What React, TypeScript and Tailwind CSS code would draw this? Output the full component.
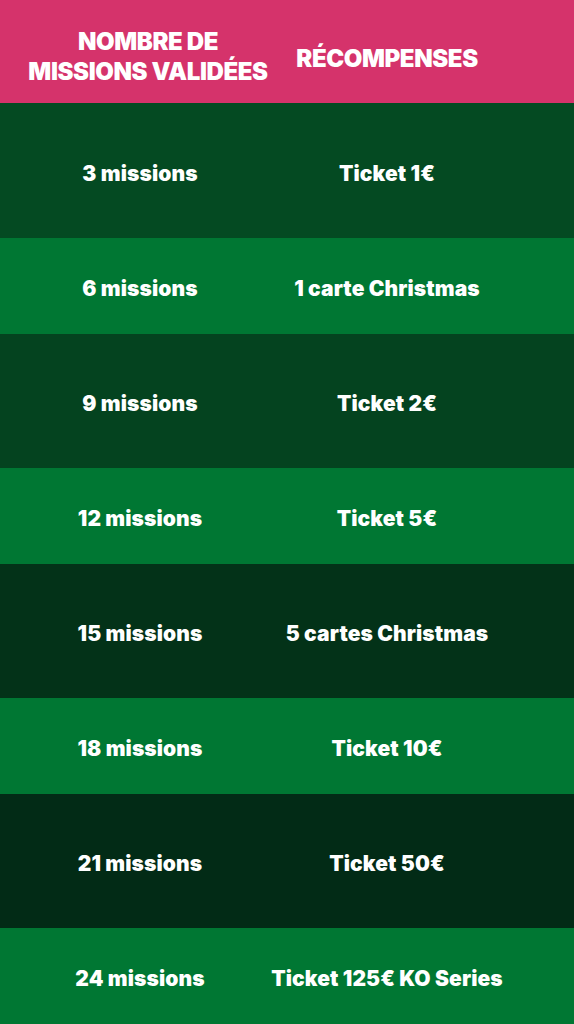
const rows = [
  { missions: "3 missions", reward: "Ticket 1€", bg: "bg-[#044a22]", h: "h-[135px]" },
  { missions: "6 missions", reward: "1 carte Christmas", bg: "bg-[#007733]", h: "h-[96px]" },
  { missions: "9 missions", reward: "Ticket 2€", bg: "bg-[#04431f]", h: "h-[134px]" },
  { missions: "12 missions", reward: "Ticket 5€", bg: "bg-[#007733]", h: "h-[96px]" },
  { missions: "15 missions", reward: "5 cartes Christmas", bg: "bg-[#033218]", h: "h-[134px]" },
  { missions: "18 missions", reward: "Ticket 10€", bg: "bg-[#007733]", h: "h-[96px]" },
  { missions: "21 missions", reward: "Ticket 50€", bg: "bg-[#022b16]", h: "h-[134px]" },
  { missions: "24 missions", reward: "Ticket 125€ KO Series", bg: "bg-[#007733]", h: "h-[96px]" },
];

export default function App() {
  return (
    <div className="w-[574px] h-[1024px] overflow-hidden font-['Inter',sans-serif] font-black text-white">
      <div className="grid h-[103px] grid-cols-[280px_214px] items-center bg-[#d5336b] text-[24px] uppercase leading-[30px] tracking-[-0.4px]">
        <div className="flex flex-col items-center pl-[16px] pt-[10px] whitespace-nowrap">
          <span>Nombre de</span>
          <span>Missions validées</span>
        </div>
        <div className="flex justify-center whitespace-nowrap pt-[14px]">Récompenses</div>
      </div>

      {rows.map((row) => (
        <div
          key={row.missions}
          className={`grid grid-cols-[280px_214px] items-center pt-[6px] text-[21px] tracking-[0.1px] ${row.bg} ${row.h}`}
        >
          <div className="flex justify-center whitespace-nowrap">{row.missions}</div>
          <div className="flex justify-center whitespace-nowrap">{row.reward}</div>
        </div>
      ))}
    </div>
  );
}
